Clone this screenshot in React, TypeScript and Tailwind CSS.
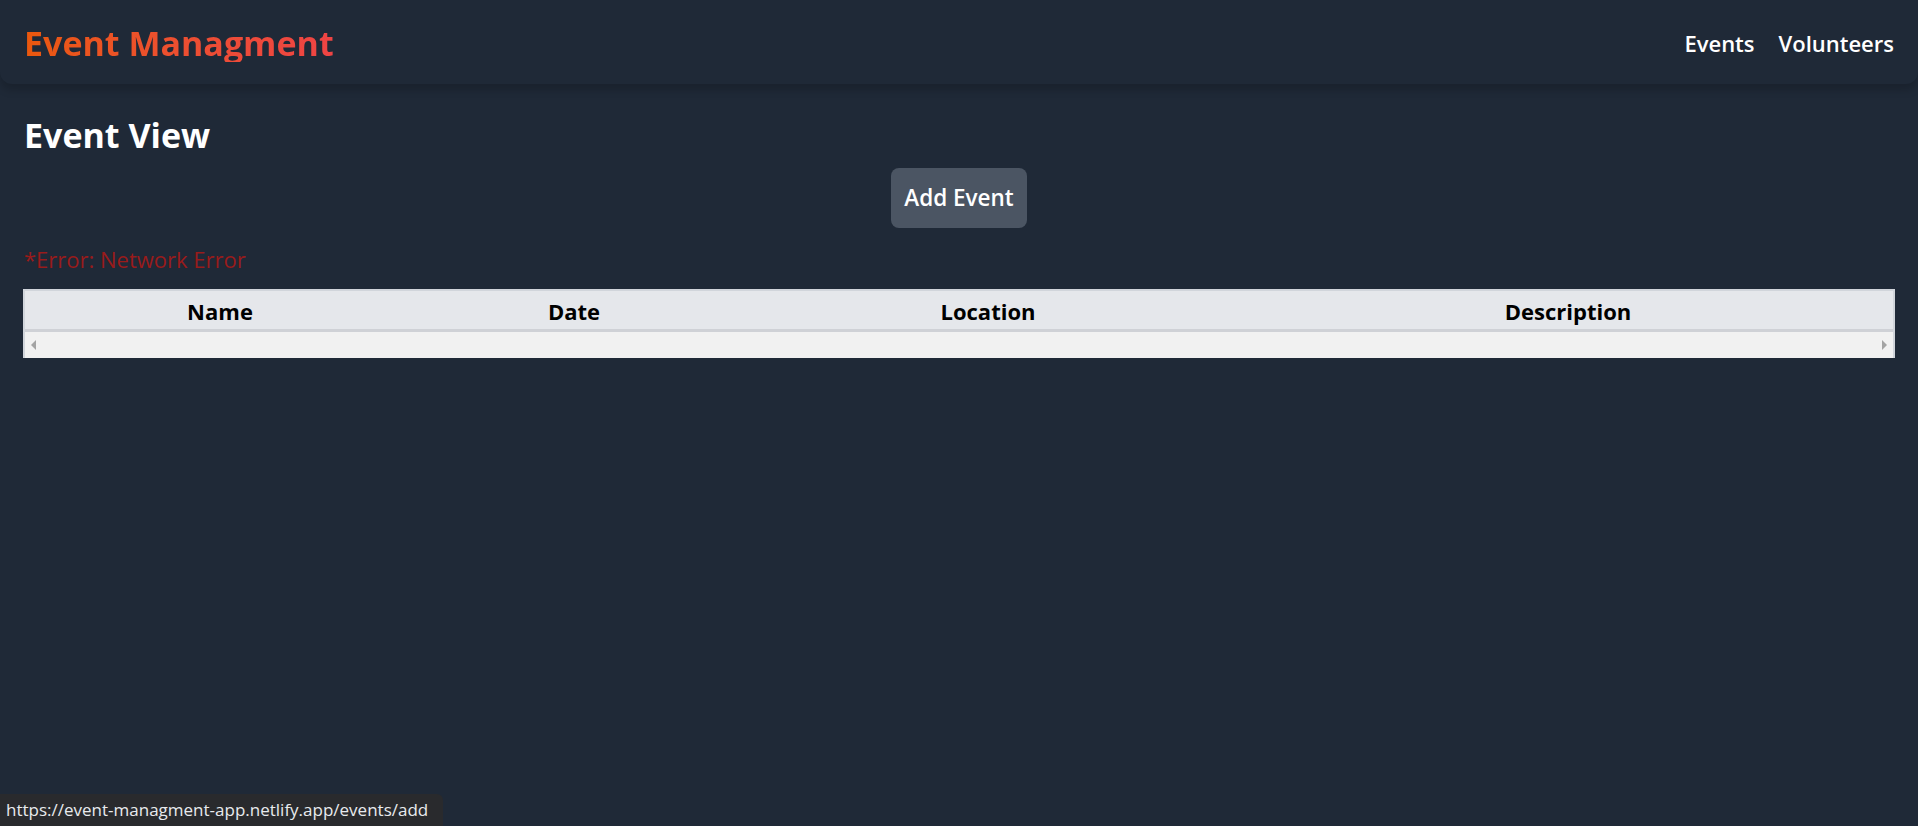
import React from "react";

const font = { fontFamily: '"Open Sans", "Noto Sans", sans-serif' };

function Header() {
  return (
    <header className="h-[84px] px-[24px] flex items-center justify-between bg-[#1f2937] rounded-b-xl shadow-[0_6px_8px_rgba(0,0,0,0.18)]">
      <h1 className="text-[34px] font-bold bg-linear-to-r from-[#ea580c] to-[#ef4444] bg-clip-text text-transparent leading-none pt-[4px] pb-[2px]">
        Event Managment
      </h1>
      <nav className="flex gap-[24px] text-[22px] font-semibold text-white pt-[2px]">
        <a href="#">Events</a>
        <a href="#">Volunteers</a>
      </nav>
    </header>
  );
}

const cols = [
  { label: "Name", w: "w-[390px]" },
  { label: "Date", w: "w-[318px]" },
  { label: "Location", w: "w-[510px]" },
  { label: "Description", w: "" },
];

function EventTable() {
  return (
    <div className="mx-[23px] border-2 border-[#d1d5db] border-b-0 bg-[#f1f1f1]">
      <table className="w-full table-fixed border-collapse">
        <thead>
          <tr className="bg-[#e5e7eb] border-b-[3px] border-[#cfd1d6]">
            {cols.map((c) => (
              <th key={c.label} className={`${c.w} h-[39px] pt-[4px] text-[22px] font-bold text-black text-center`}>
                {c.label}
              </th>
            ))}
          </tr>
        </thead>
      </table>
      {/* fake scrollbar */}
      <div className="h-[26px] flex items-center justify-between px-[6px]">
        <span className="w-0 h-0 border-y-[5px] border-y-transparent border-r-[5px] border-r-[#a3a3a3]" />
        <span className="w-0 h-0 border-y-[5px] border-y-transparent border-l-[5px] border-l-[#a3a3a3]" />
      </div>
    </div>
  );
}

export default function App() {
  return (
    <div style={font} className="relative min-h-[826px] bg-[#1f2937]">
      <Header />
      <main>
        <h2 className="px-[24px] pt-[30px] text-[34px] font-bold text-white leading-[42px]">Event View</h2>
        <div className="flex justify-center mt-[12px]">
          <button className="w-[136px] h-[60px] rounded-lg bg-[#4b5563] text-white text-[22.5px] font-semibold">
            Add Event
          </button>
        </div>
        <p className="px-[24px] mt-[16px] text-[22px] text-[#991b1b] leading-[30px]">*Error: Network Error</p>
        <div className="mt-[15px]">
          <EventTable />
        </div>
      </main>
      <div className="absolute left-0 bottom-0 h-[32px] w-[443px] flex items-center pl-[6px] bg-[#292a2d] rounded-tr-md text-[17px] text-[#e8eaed]">
        https://event-managment-app.netlify.app/events/add
      </div>
    </div>
  );
}
